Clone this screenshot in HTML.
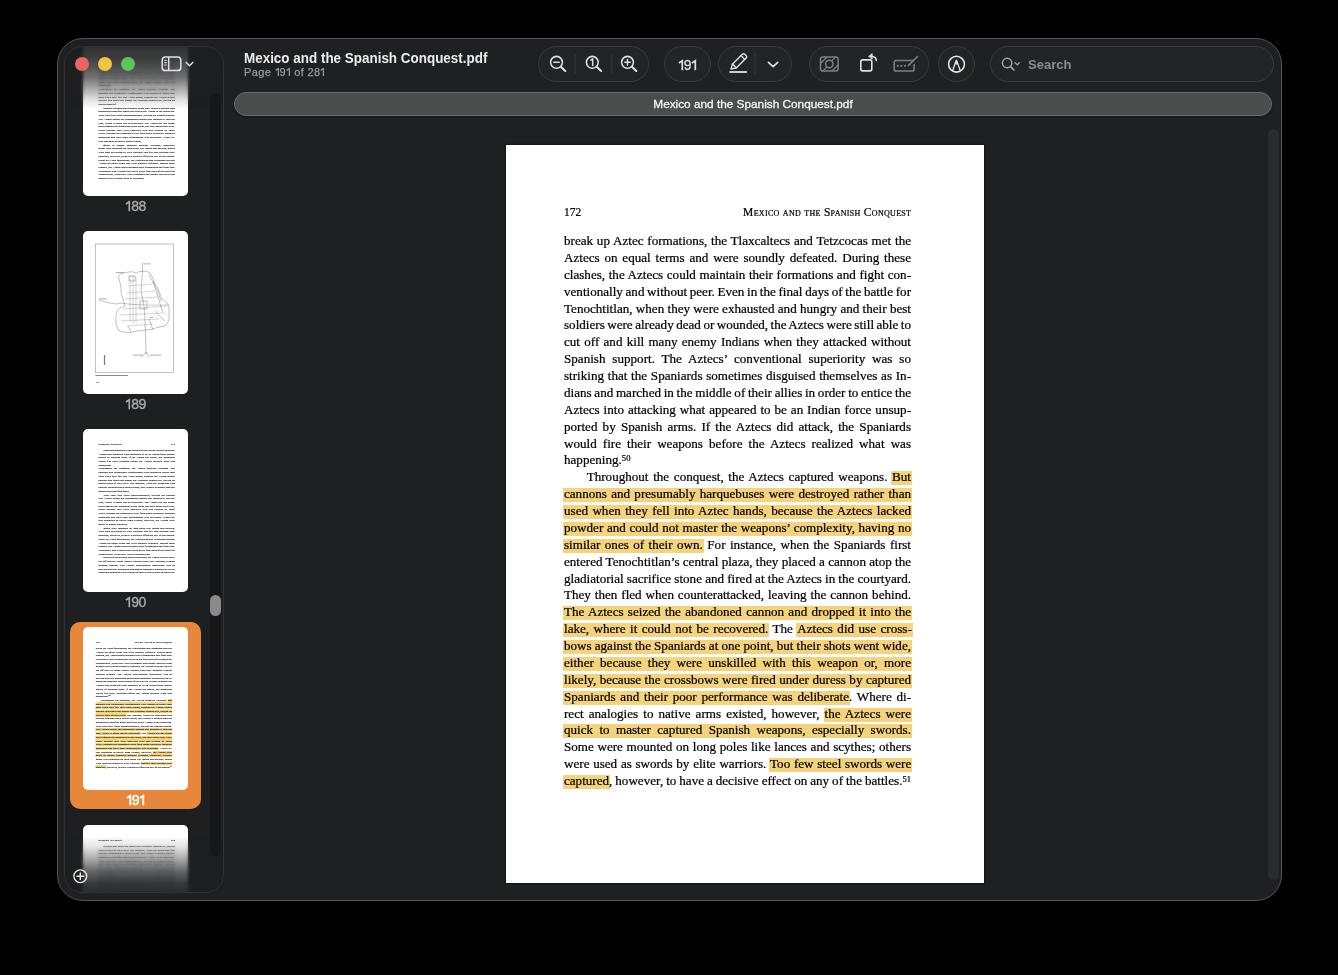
<!DOCTYPE html>
<html><head><meta charset="utf-8">
<style>
*{margin:0;padding:0;box-sizing:border-box}
html,body{width:1338px;height:975px;background:#000;overflow:hidden;font-family:"Liberation Sans",sans-serif}
.abs{position:absolute}
#win,#tab,.abs,#page,#sidewrap{will-change:transform}
#win{position:absolute;left:57px;top:38px;width:1225px;height:863px;border-radius:26px;background:#1f2022;border:1px solid #535455;overflow:hidden}
#side{position:absolute;left:64px;top:46px;width:160px;height:847px;border-radius:18px;border:1px solid #38393b;background:#1e1f21;overflow:hidden}
#sidewrap{position:absolute;left:64px;top:46px;width:160px;height:847px;border-radius:18px;background:#1e1f21;overflow:hidden}
#side{position:absolute;left:64px;top:46px;width:160px;height:847px;border-radius:18px;border:1px solid #313234;background:transparent}
.th{position:absolute;left:19px;width:105px;height:162.8px;background:#fff;border-radius:5px;overflow:hidden}
.tp{position:absolute;left:0;top:0;width:478px;height:738px;transform:scale(0.21967);transform-origin:0 0}
.tp .ln{-webkit-text-stroke:0.5px #1a1a1a;color:#1a1a1a}
.lab{position:absolute;left:19px;width:105px;text-align:center;font-size:14px;letter-spacing:-0.5px;color:#a9a9a9;line-height:16px;-webkit-text-stroke:0.35px #a9a9a9}
#sel{position:absolute;left:5.5px;top:575.6px;width:131.7px;height:187.4px;border-radius:10px;background:#e6873a}
#fadetop{position:absolute;left:0;top:0;width:160px;height:64px;background:linear-gradient(to bottom,rgba(30,31,33,.93) 0px,rgba(30,31,33,.87) 10px,rgba(30,31,33,.78) 20px,rgba(30,31,33,.62) 32px,rgba(30,31,33,.35) 44px,rgba(30,31,33,.1) 55px,rgba(30,31,33,0) 64px)}
#blurtop{position:absolute;left:0;top:0;width:160px;height:62px;backdrop-filter:blur(1.6px);-webkit-mask-image:linear-gradient(to bottom,#000 0,#000 30px,transparent 62px)}
#blurbot{position:absolute;left:0;top:790px;width:160px;height:57px;backdrop-filter:blur(1.6px);-webkit-mask-image:linear-gradient(to top,#000 0,#000 25px,transparent 57px)}
#fadebot{position:absolute;left:0;top:790px;width:160px;height:57px;background:linear-gradient(to top,rgba(30,31,33,.95) 0px,rgba(30,31,33,.88) 10px,rgba(30,31,33,.68) 22px,rgba(30,31,33,.38) 34px,rgba(30,31,33,.12) 46px,rgba(30,31,33,0) 57px)}
#strack{position:absolute;left:145.7px;top:47px;width:11px;height:763px;border-radius:5.5px;background:#161718}
#sthumb{position:absolute;left:146px;top:549.3px;width:10.8px;height:20.5px;border-radius:5.4px;background:#8a8a8a}
.pill{position:absolute;top:46px;height:36px;border-radius:18px;border:1px solid #3a3b3d;background:#232426}
#tab{position:absolute;left:234px;top:92px;width:1038px;height:24px;border-radius:12px;background:#4b4c4c;border:1px solid #6a6b6b;box-shadow:0 1px 2px rgba(0,0,0,.35);color:#f4f4f4;font-size:11.8px;-webkit-text-stroke:0.3px #f4f4f4;text-align:center;line-height:22px;white-space:nowrap}
#page{position:absolute;left:506px;top:145px;width:478px;height:738px;background:#fff;box-shadow:0 0 1.5px 0.6px rgba(0,0,0,.35)}
.ln{position:absolute;white-space:nowrap;font-family:"Liberation Serif",serif;font-size:13.1px;line-height:16.875px;color:#000;-webkit-text-stroke:0.22px #000}
.ln b{font-weight:normal;padding:0 1px 2px 1px;margin:0 -1px;background:linear-gradient(to bottom,transparent 1.6px,#f5d27c 1.6px,#f5d27c 15.6px,transparent 15.6px)}
.ln sup{font-size:8.6px;vertical-align:top;position:relative;top:-2px}
#vtrack{position:absolute;left:1268px;top:129px;width:11px;height:751px;border-radius:6px;background:#2a2b2d}
</style></head><body>
<div id="win"></div>
<div id="sidewrap">
<div class="th" style="top:-12.6px"><div class="tp"><!--T188-->
<div class="ln" style="top:96.04px;left:71.0px;word-spacing:-0.781px">soldiers were already dead or wounded, the Aztecs were still able to</div>
<div class="ln" style="top:112.92px;left:71.0px;word-spacing:0.980px">cut off and kill many enemy Indians when they attacked without</div>
<div class="ln" style="top:129.79px;left:71.0px;word-spacing:3.612px">Spanish support. The Aztecs’ conventional superiority was so</div>
<div class="ln" style="top:146.67px;left:71.0px;word-spacing:0.463px">striking that the Spaniards sometimes disguised themselves as In-</div>
<div class="ln" style="top:163.54px;left:71.0px;word-spacing:-0.578px">dians and marched in the middle of their allies in order to entice the</div>
<div class="ln" style="top:180.42px;left:71.0px;word-spacing:0.669px">Aztecs into attacking what appeared to be an Indian force unsup-</div>
<div class="ln" style="top:197.29px;left:71.0px;word-spacing:1.900px">ported by Spanish arms. If the Aztecs did attack, the Spaniards</div>
<div class="ln" style="top:214.17px;left:71.0px;word-spacing:2.804px">would fire their weapons before the Aztecs realized what was</div>
<div class="ln" style="top:231.04px;left:71.0px;word-spacing:289.172px">happening.</div>
<div class="ln" style="top:247.92px;left:71.0px;word-spacing:4.638px">Throughout the conquest, the Aztecs captured weapons. But</div>
<div class="ln" style="top:264.79px;left:71.0px;word-spacing:1.007px">cannons and presumably harquebuses were destroyed rather than</div>
<div class="ln" style="top:281.66px;left:71.0px;word-spacing:1.141px">used when they fell into Aztec hands, because the Aztecs lacked</div>
<div class="ln" style="top:298.54px;left:71.0px;word-spacing:0.375px">powder and could not master the weapons’ complexity, having no</div>
<div class="ln" style="top:315.41px;left:71.0px;word-spacing:0.000px">similar ones of</div>
<div class="ln" style="top:332.29px;left:93.7px;word-spacing:-0.445px">entered Tenochtitlan’s central plaza, they placed a cannon atop</div>
<div class="ln" style="top:349.16px;left:71.0px;word-spacing:-0.094px">gladiatorial sacrifice stone and fired at the Aztecs in the courtyard.</div>
<div class="ln" style="top:366.04px;left:71.0px;word-spacing:0.654px">They then fled when counterattacked, leaving the cannon behind.</div>
<div class="ln" style="top:382.91px;left:71.0px;word-spacing:1.031px">The Aztecs seized the abandoned cannon and dropped it into the</div>
<div class="ln" style="top:399.79px;left:71.0px;word-spacing:1.192px">lake, where it could not be recovered. The Aztecs did use cross-</div>
<div class="ln" style="top:416.66px;left:71.0px;word-spacing:-0.159px">bows against the Spaniards at one point, but their shots went wide,</div>
<div class="ln" style="top:433.54px;left:71.0px;word-spacing:2.981px">either because they were unskilled with this weapon or, more</div>
<div class="ln" style="top:450.41px;left:71.0px;word-spacing:0.189px">likely, because the crossbows were fired under duress by captured</div>
<div class="ln" style="top:467.29px;left:71.0px;word-spacing:1.457px">Spaniards and their poor performance was deliberate. Where di-</div>
<div class="ln" style="top:484.16px;left:71.0px;word-spacing:0.000px">rect analogies to native arms existed,</div>
<div class="ln" style="top:501.04px;left:93.7px;word-spacing:7.081px">quick to master captured Spanish weapons, especially</div>
<div class="ln" style="top:517.91px;left:71.0px;word-spacing:0.372px">Some were mounted on long poles like lances and scythes; others</div>
<div class="ln" style="top:534.79px;left:71.0px;word-spacing:0.446px">were used as swords by elite warriors. Too few steel swords were</div>
<div class="ln" style="top:551.66px;left:71.0px;word-spacing:0.480px">captured, however, to have a decisive effect on any of the battles.</div>
<div class="ln" style="top:568.54px;left:71.0px;word-spacing:0.495px">break up Aztec formations, the Tlaxcaltecs and Tetzcocas met the</div>
<div class="ln" style="top:585.41px;left:71.0px;word-spacing:1.550px">Aztecs on equal terms and were soundly defeated. During these</div>
<div class="ln" style="top:602.29px;left:71.0px;word-spacing:0.335px">clashes, the Aztecs could maintain their formations and fight con-</div>
<div class="ln" style="top:619.16px;left:71.0px;word-spacing:-0.628px">ventionally and without peer. Even in the final days of the battle for</div>
<div class="ln" style="top:636.04px;left:71.0px;word-spacing:0.035px">Tenochtitlan, when they were exhausted and hungry and their best</div>
<div class="ln" style="top:652.91px;left:71.0px;word-spacing:0.000px">soldiers were already dead or wounded,</div>
<!--/T188--></div></div>
<div class="lab" style="top:152px"><svg width="6.2" height="10.2" viewBox="0 0 6.2 10.2" style="vertical-align:baseline;overflow:visible"><path d="M0.90,3 L4.30,0.75 L4.30,10.2" fill="none" stroke="currentColor" stroke-width="1.65"/></svg>88</div>
<div class="th" style="top:185.2px"><svg width="105" height="162" viewBox="0 0 105 162"><!--MAP--><g fill="none" stroke="#3a3a3a" stroke-width="0.32">
<rect x="12.5" y="13" width="77.7" height="128.5" stroke="#666" stroke-width="0.4"/>
<path d="M36,48 Q34,44 40,42 L46,41 Q50,40 52,42 L55,41 Q62,39 66,41 L68,44 Q71,48 72,53 L75,57 Q77,63 79,68 L84,72 Q87,75 86,80 L86,88 Q85,93 82,95 L76,96 Q68,99 62,99 L54,100 Q46,103 40,101 L35,99 Q32,93 33,85 L34,80 Q37,76 42,75 L40,68 Q37,62 38,56 Z"/>
<path d="M59.5,31.6 L59.5,40 M59.5,40 L58,60 L61,75 L62,89.7 L63.1,123 M63.1,121 L58.1,126.2 M63.1,121 L66.4,126.2"/>
<path d="M15.8,69 Q22,71 27,72 Q33,74 38,72 L44.9,73 L60,74"/>
<path stroke="#777" d="M47,44 L47,90 M50,44 L50,92 M53,46 L53,92 M45,55 L70,53 M44,62 L72,60 M42,68 L75,66 M40,78 L84,75 M36,84 L80,82 M38,90 L76,88 M44,95 L70,93 M60,74 L86,74"/>
<path d="M66,44 L74,58 L78,70 M70,50 L80,82 M57,70 L64,70 L64,78 L57,78 Z M46,45 L52,45 L52,50 L46,50 Z M72,80 L82,90"/>
<path d="M45,95 L48,101 M66,88 L70,99"/>
</g>
<g fill="#777"><rect x="20.9" y="124" width="1.2" height="10" /></g>
<g fill="#9a9a9a">
<rect x="60.5" y="32.5" width="7" height="0.8"/>
<rect x="33" y="41" width="8" height="0.8"/>
<rect x="15.8" y="67.5" width="8" height="0.8"/>
<rect x="49.8" y="123.7" width="10" height="0.8"/>
<rect x="67.3" y="123.7" width="10.7" height="0.8"/>
<rect x="12.5" y="144" width="32.4" height="1" fill="#888"/>
<rect x="13.3" y="151" width="2.8" height="1" fill="#999"/>
<rect x="67" y="86" width="3" height="0.8"/>
</g><!--/MAP--></svg></div>
<div class="lab" style="top:350px"><svg width="6.2" height="10.2" viewBox="0 0 6.2 10.2" style="vertical-align:baseline;overflow:visible"><path d="M0.90,3 L4.30,0.75 L4.30,10.2" fill="none" stroke="currentColor" stroke-width="1.65"/></svg>89</div>
<div class="th" style="top:383.2px"><div class="tp"><!--T190-->
<div class="ln" style="top:59.3px;left:71px;font-size:11.5px;font-variant:small-caps;letter-spacing:0.31px">Conquest and Defeat</div>
<div class="ln" style="top:59.3px;right:59.7px;font-size:11.5px">173</div>
<div class="ln" style="top:88.04px;left:93.7px;word-spacing:-0.911px">dians and marched in the middle of their allies in order to entice</div>
<div class="ln" style="top:104.92px;left:71.0px;word-spacing:0.669px">Aztecs into attacking what appeared to be an Indian force unsup-</div>
<div class="ln" style="top:121.79px;left:71.0px;word-spacing:1.900px">ported by Spanish arms. If the Aztecs did attack, the Spaniards</div>
<div class="ln" style="top:138.67px;left:71.0px;word-spacing:2.804px">would fire their weapons before the Aztecs realized what was</div>
<div class="ln" style="top:155.54px;left:71.0px;word-spacing:289.172px">happening.</div>
<div class="ln" style="top:172.42px;left:71.0px;word-spacing:4.638px">Throughout the conquest, the Aztecs captured weapons. But</div>
<div class="ln" style="top:189.29px;left:71.0px;word-spacing:1.007px">cannons and presumably harquebuses were destroyed rather than</div>
<div class="ln" style="top:206.17px;left:71.0px;word-spacing:1.141px">used when they fell into Aztec hands, because the Aztecs lacked</div>
<div class="ln" style="top:223.04px;left:71.0px;word-spacing:0.375px">powder and could not master the weapons’ complexity, having no</div>
<div class="ln" style="top:239.92px;left:71.0px;word-spacing:1.172px">similar ones of their own. For instance, when the Spaniards first</div>
<div class="ln" style="top:256.79px;left:71.0px;word-spacing:-0.014px">entered Tenochtitlan’s central plaza, they placed a cannon atop the</div>
<div class="ln" style="top:273.66px;left:71.0px;word-spacing:0.000px">gladiatorial sacrifice stone</div>
<div class="ln" style="top:290.54px;left:93.7px;word-spacing:3.532px">They then fled when counterattacked, leaving the cannon</div>
<div class="ln" style="top:307.41px;left:71.0px;word-spacing:1.031px">The Aztecs seized the abandoned cannon and dropped it into the</div>
<div class="ln" style="top:324.29px;left:71.0px;word-spacing:1.192px">lake, where it could not be recovered. The Aztecs did use cross-</div>
<div class="ln" style="top:341.16px;left:71.0px;word-spacing:-0.159px">bows against the Spaniards at one point, but their shots went wide,</div>
<div class="ln" style="top:358.04px;left:71.0px;word-spacing:2.981px">either because they were unskilled with this weapon or, more</div>
<div class="ln" style="top:374.91px;left:71.0px;word-spacing:0.189px">likely, because the crossbows were fired under duress by captured</div>
<div class="ln" style="top:391.79px;left:71.0px;word-spacing:1.457px">Spaniards and their poor performance was deliberate. Where di-</div>
<div class="ln" style="top:408.66px;left:71.0px;word-spacing:1.812px">rect analogies to native arms existed, however, the Aztecs were</div>
<div class="ln" style="top:425.54px;left:71.0px;word-spacing:0.000px">quick to master captured</div>
<div class="ln" style="top:442.41px;left:93.7px;word-spacing:1.811px">Some were mounted on long poles like lances and scythes;</div>
<div class="ln" style="top:459.29px;left:71.0px;word-spacing:0.446px">were used as swords by elite warriors. Too few steel swords were</div>
<div class="ln" style="top:476.16px;left:71.0px;word-spacing:0.480px">captured, however, to have a decisive effect on any of the battles.</div>
<div class="ln" style="top:493.04px;left:71.0px;word-spacing:0.495px">break up Aztec formations, the Tlaxcaltecs and Tetzcocas met the</div>
<div class="ln" style="top:509.91px;left:71.0px;word-spacing:1.550px">Aztecs on equal terms and were soundly defeated. During these</div>
<div class="ln" style="top:526.79px;left:71.0px;word-spacing:0.335px">clashes, the Aztecs could maintain their formations and fight con-</div>
<div class="ln" style="top:543.66px;left:71.0px;word-spacing:-0.628px">ventionally and without peer. Even in the final days of the battle for</div>
<div class="ln" style="top:560.54px;left:71.0px;word-spacing:0.000px">Tenochtitlan, when they were exhausted and</div>
<div class="ln" style="top:577.41px;left:93.7px;word-spacing:-1.782px">soldiers were already dead or wounded, the Aztecs were still able</div>
<div class="ln" style="top:594.29px;left:71.0px;word-spacing:0.980px">cut off and kill many enemy Indians when they attacked without</div>
<div class="ln" style="top:611.16px;left:71.0px;word-spacing:3.612px">Spanish support. The Aztecs’ conventional superiority was so</div>
<div class="ln" style="top:628.04px;left:71.0px;word-spacing:0.463px">striking that the Spaniards sometimes disguised themselves as In-</div>
<div class="ln" style="top:644.91px;left:71.0px;word-spacing:-0.578px">dians and marched in the middle of their allies in order to entice the</div>
<!--/T190--></div></div>
<div class="lab" style="top:548px"><svg width="6.2" height="10.2" viewBox="0 0 6.2 10.2" style="vertical-align:baseline;overflow:visible"><path d="M0.90,3 L4.30,0.75 L4.30,10.2" fill="none" stroke="currentColor" stroke-width="1.65"/></svg>90</div>
<div id="sel"></div>
<div class="th" style="top:581px"><div class="tp"><!--T191-->
<div class="ln" style="top:59.3px;left:58px;font-size:11.5px">172</div>
<div class="ln" style="top:59.3px;right:72.7px;font-size:11.5px;font-variant:small-caps;letter-spacing:0.31px">Mexico and the Spanish Conquest</div>
<div class="ln" style="top:88.04px;left:58.0px;word-spacing:0.495px">break up Aztec formations, the Tlaxcaltecs and Tetzcocas met the</div>
<div class="ln" style="top:104.92px;left:58.0px;word-spacing:1.550px">Aztecs on equal terms and were soundly defeated. During these</div>
<div class="ln" style="top:121.79px;left:58.0px;word-spacing:0.335px">clashes, the Aztecs could maintain their formations and fight con-</div>
<div class="ln" style="top:138.67px;left:58.0px;word-spacing:-0.628px">ventionally and without peer. Even in the final days of the battle for</div>
<div class="ln" style="top:155.54px;left:58.0px;word-spacing:0.035px">Tenochtitlan, when they were exhausted and hungry and their best</div>
<div class="ln" style="top:172.42px;left:58.0px;word-spacing:-0.781px">soldiers were already dead or wounded, the Aztecs were still able to</div>
<div class="ln" style="top:189.29px;left:58.0px;word-spacing:0.980px">cut off and kill many enemy Indians when they attacked without</div>
<div class="ln" style="top:206.17px;left:58.0px;word-spacing:3.612px">Spanish support. The Aztecs’ conventional superiority was so</div>
<div class="ln" style="top:223.04px;left:58.0px;word-spacing:0.463px">striking that the Spaniards sometimes disguised themselves as In-</div>
<div class="ln" style="top:239.92px;left:58.0px;word-spacing:-0.578px">dians and marched in the middle of their allies in order to entice the</div>
<div class="ln" style="top:256.79px;left:58.0px;word-spacing:0.669px">Aztecs into attacking what appeared to be an Indian force unsup-</div>
<div class="ln" style="top:273.66px;left:58.0px;word-spacing:1.900px">ported by Spanish arms. If the Aztecs did attack, the Spaniards</div>
<div class="ln" style="top:290.54px;left:58.0px;word-spacing:2.804px">would fire their weapons before the Aztecs realized what was</div>
<div class="ln" style="top:307.41px;left:58.0px;word-spacing:0.000px">happening.<sup>50</sup></div>
<div class="ln" style="top:324.29px;left:80.7px;word-spacing:1.396px">Throughout the conquest, the Aztecs captured weapons. <b>But</b></div>
<div class="ln" style="top:341.16px;left:58.0px;word-spacing:1.007px"><b>cannons and presumably harquebuses were destroyed rather than</b></div>
<div class="ln" style="top:358.04px;left:58.0px;word-spacing:1.141px"><b>used when they fell into Aztec hands, because the Aztecs lacked</b></div>
<div class="ln" style="top:374.91px;left:58.0px;word-spacing:0.375px"><b>powder and could not master the weapons’ complexity, having no</b></div>
<div class="ln" style="top:391.79px;left:58.0px;word-spacing:1.172px"><b>similar ones of their own.</b> For instance, when the Spaniards first</div>
<div class="ln" style="top:408.66px;left:58.0px;word-spacing:-0.014px">entered Tenochtitlan’s central plaza, they placed a cannon atop the</div>
<div class="ln" style="top:425.54px;left:58.0px;word-spacing:-0.094px">gladiatorial sacrifice stone and fired at the Aztecs in the courtyard.</div>
<div class="ln" style="top:442.41px;left:58.0px;word-spacing:0.654px">They then fled when counterattacked, leaving the cannon behind.</div>
<div class="ln" style="top:459.29px;left:58.0px;word-spacing:1.031px"><b>The Aztecs seized the abandoned cannon and dropped it into the</b></div>
<div class="ln" style="top:476.16px;left:58.0px;word-spacing:1.192px"><b>lake, where it could not be recovered.</b> The <b>Aztecs did use cross-</b></div>
<div class="ln" style="top:493.04px;left:58.0px;word-spacing:-0.159px"><b>bows against the Spaniards at one point, but their shots went wide,</b></div>
<div class="ln" style="top:509.91px;left:58.0px;word-spacing:2.981px"><b>either because they were unskilled with this weapon or, more</b></div>
<div class="ln" style="top:526.79px;left:58.0px;word-spacing:0.189px"><b>likely, because the crossbows were fired under duress by captured</b></div>
<div class="ln" style="top:543.66px;left:58.0px;word-spacing:1.457px"><b>Spaniards and their poor performance was deliberate</b>. Where di-</div>
<div class="ln" style="top:560.54px;left:58.0px;word-spacing:1.812px">rect analogies to native arms existed, however, <b>the Aztecs were</b></div>
<div class="ln" style="top:577.41px;left:58.0px;word-spacing:3.078px"><b>quick to master captured Spanish weapons, especially swords.</b></div>
<div class="ln" style="top:594.29px;left:58.0px;word-spacing:0.372px">Some were mounted on long poles like lances and scythes; others</div>
<div class="ln" style="top:611.16px;left:58.0px;word-spacing:0.446px">were used as swords by elite warriors. <b>Too few steel swords were</b></div>
<div class="ln" style="top:628.04px;left:58.0px;word-spacing:-0.301px"><b>captured</b>, however, to have a decisive effect on any of the battles.<sup>51</sup></div>
<!--/T191--></div></div>
<div class="lab" style="top:745.8px;color:#fff;-webkit-text-stroke:0.5px #fff;letter-spacing:-0.3px"><svg width="6.2" height="10.2" viewBox="0 0 6.2 10.2" style="vertical-align:baseline;overflow:visible"><path d="M0.90,3 L4.30,0.75 L4.30,10.2" fill="none" stroke="currentColor" stroke-width="1.9"/></svg>9<svg width="6.2" height="10.2" viewBox="0 0 6.2 10.2" style="vertical-align:baseline;overflow:visible"><path d="M0.90,3 L4.30,0.75 L4.30,10.2" fill="none" stroke="currentColor" stroke-width="1.9"/></svg></div>
<div class="th" style="top:778.8px"><div class="tp"><!--T192-->
<div class="ln" style="top:59.3px;left:71px;font-size:11.5px;font-variant:small-caps;letter-spacing:0.31px">Conquest and Defeat</div>
<div class="ln" style="top:59.3px;right:59.7px;font-size:11.5px">175</div>
<div class="ln" style="top:88.04px;left:93.7px;word-spacing:-0.371px">powder and could not master the weapons’ complexity, having</div>
<div class="ln" style="top:104.92px;left:71.0px;word-spacing:1.172px">similar ones of their own. For instance, when the Spaniards first</div>
<div class="ln" style="top:121.79px;left:71.0px;word-spacing:-0.014px">entered Tenochtitlan’s central plaza, they placed a cannon atop the</div>
<div class="ln" style="top:138.67px;left:71.0px;word-spacing:-0.094px">gladiatorial sacrifice stone and fired at the Aztecs in the courtyard.</div>
<div class="ln" style="top:155.54px;left:71.0px;word-spacing:0.654px">They then fled when counterattacked, leaving the cannon behind.</div>
<div class="ln" style="top:172.42px;left:71.0px;word-spacing:1.031px">The Aztecs seized the abandoned cannon and dropped it into the</div>
<div class="ln" style="top:189.29px;left:71.0px;word-spacing:1.192px">lake, where it could not be recovered. The Aztecs did use cross-</div>
<div class="ln" style="top:206.17px;left:71.0px;word-spacing:-0.159px">bows against the Spaniards at one point, but their shots went wide,</div>
<div class="ln" style="top:223.04px;left:71.0px;word-spacing:2.981px">either because they were unskilled with this weapon or, more</div>
<div class="ln" style="top:239.92px;left:71.0px;word-spacing:0.189px">likely, because the crossbows were fired under duress by captured</div>
<div class="ln" style="top:256.79px;left:71.0px;word-spacing:1.457px">Spaniards and their poor performance was deliberate. Where di-</div>
<div class="ln" style="top:273.66px;left:71.0px;word-spacing:1.812px">rect analogies to native arms existed, however, the Aztecs were</div>
<div class="ln" style="top:290.54px;left:71.0px;word-spacing:3.078px">quick to master captured Spanish weapons, especially swords.</div>
<div class="ln" style="top:307.41px;left:71.0px;word-spacing:0.372px">Some were mounted on long poles like lances and scythes; others</div>
<div class="ln" style="top:324.29px;left:71.0px;word-spacing:0.446px">were used as swords by elite warriors. Too few steel swords were</div>
<div class="ln" style="top:341.16px;left:71.0px;word-spacing:0.480px">captured, however, to have a decisive effect on any of the battles.</div>
<div class="ln" style="top:358.04px;left:71.0px;word-spacing:0.495px">break up Aztec formations, the Tlaxcaltecs and Tetzcocas met the</div>
<div class="ln" style="top:374.91px;left:71.0px;word-spacing:1.550px">Aztecs on equal terms and were soundly defeated. During these</div>
<div class="ln" style="top:391.79px;left:71.0px;word-spacing:0.335px">clashes, the Aztecs could maintain their formations and fight con-</div>
<div class="ln" style="top:408.66px;left:71.0px;word-spacing:-0.628px">ventionally and without peer. Even in the final days of the battle for</div>
<div class="ln" style="top:425.54px;left:71.0px;word-spacing:0.035px">Tenochtitlan, when they were exhausted and hungry and their best</div>
<div class="ln" style="top:442.41px;left:71.0px;word-spacing:-0.781px">soldiers were already dead or wounded, the Aztecs were still able to</div>
<div class="ln" style="top:459.29px;left:71.0px;word-spacing:0.980px">cut off and kill many enemy Indians when they attacked without</div>
<div class="ln" style="top:476.16px;left:71.0px;word-spacing:3.612px">Spanish support. The Aztecs’ conventional superiority was so</div>
<div class="ln" style="top:493.04px;left:71.0px;word-spacing:0.463px">striking that the Spaniards sometimes disguised themselves as In-</div>
<div class="ln" style="top:509.91px;left:71.0px;word-spacing:-0.578px">dians and marched in the middle of their allies in order to entice the</div>
<div class="ln" style="top:526.79px;left:71.0px;word-spacing:0.669px">Aztecs into attacking what appeared to be an Indian force unsup-</div>
<div class="ln" style="top:543.66px;left:71.0px;word-spacing:1.900px">ported by Spanish arms. If the Aztecs did attack, the Spaniards</div>
<div class="ln" style="top:560.54px;left:71.0px;word-spacing:2.804px">would fire their weapons before the Aztecs realized what was</div>
<div class="ln" style="top:577.41px;left:71.0px;word-spacing:289.172px">happening.</div>
<div class="ln" style="top:594.29px;left:71.0px;word-spacing:4.638px">Throughout the conquest, the Aztecs captured weapons. But</div>
<div class="ln" style="top:611.16px;left:71.0px;word-spacing:1.007px">cannons and presumably harquebuses were destroyed rather than</div>
<div class="ln" style="top:628.04px;left:71.0px;word-spacing:1.141px">used when they fell into Aztec hands, because the Aztecs lacked</div>
<div class="ln" style="top:644.91px;left:71.0px;word-spacing:0.375px">powder and could not master the weapons’ complexity, having no</div>
<!--/T192--></div></div>
<div id="blurtop"></div><div id="fadetop"></div>
<div id="blurbot"></div><div id="fadebot"></div>
<div id="strack"></div>
<div id="sthumb"></div>
</div>
<div id="side"></div>
<svg class="abs" style="left:72px;top:868px" width="17" height="17" viewBox="0 0 17 17"><g fill="none" stroke="#eeeeee" stroke-linecap="round"><circle cx="8.3" cy="8.3" r="6.4" stroke-width="1.3"/><line x1="8.3" y1="5" x2="8.3" y2="11.6" stroke-width="1.4"/><line x1="5" y1="8.3" x2="11.6" y2="8.3" stroke-width="1.4"/></g></svg>
<div class="pill" style="left:538px;width:111px"></div>
<div class="pill" style="left:664px;width:47px"></div>
<div class="pill" style="left:718px;width:74px"></div>
<div class="pill" style="left:809px;width:120px"></div>
<div class="pill" style="left:938px;width:37px"></div>
<div class="pill" style="left:990px;width:284px"></div>

<div class="abs" style="left:244px;top:49.6px;font-size:13.45px;font-weight:bold;color:#ececec;white-space:nowrap;line-height:16px;transform:scaleY(1.08);transform-origin:0 0">Mexico and the Spanish Conquest.pdf</div>
<div class="abs" style="left:244px;top:66.1px;font-size:11px;color:#9a9a9a;white-space:nowrap;line-height:13px;letter-spacing:0.36px;-webkit-text-stroke:0.25px #9a9a9a">Page <svg width="4.87" height="8.01" viewBox="0 0 4.87 8.01" style="vertical-align:baseline;overflow:visible"><path d="M0.71,2.36 L3.38,0.59 L3.38,8.01" fill="none" stroke="currentColor" stroke-width="1.25"/></svg>9<svg width="4.87" height="8.01" viewBox="0 0 4.87 8.01" style="vertical-align:baseline;overflow:visible"><path d="M0.71,2.36 L3.38,0.59 L3.38,8.01" fill="none" stroke="currentColor" stroke-width="1.25"/></svg> of 28<svg width="4.87" height="8.01" viewBox="0 0 4.87 8.01" style="vertical-align:baseline;overflow:visible"><path d="M0.71,2.36 L3.38,0.59 L3.38,8.01" fill="none" stroke="currentColor" stroke-width="1.25"/></svg></div>
<div class="abs" style="left:664px;top:56.6px;width:47px;text-align:center;font-size:14px;color:#dcdcdc;line-height:16px;-webkit-text-stroke:0.3px #dcdcdc;letter-spacing:-0.3px"><svg width="6.2" height="10.2" viewBox="0 0 6.2 10.2" style="vertical-align:baseline;overflow:visible"><path d="M0.90,3 L4.30,0.75 L4.30,10.2" fill="none" stroke="currentColor" stroke-width="1.75"/></svg>9<svg width="6.2" height="10.2" viewBox="0 0 6.2 10.2" style="vertical-align:baseline;overflow:visible"><path d="M0.90,3 L4.30,0.75 L4.30,10.2" fill="none" stroke="currentColor" stroke-width="1.75"/></svg></div>
<div class="abs" style="left:1028px;top:56.8px;font-size:13px;font-weight:bold;color:#8c8c8c;line-height:16px">Search</div>
<svg class="abs" style="left:0;top:0" width="1338" height="130" viewBox="0 0 1338 130">
 <g fill="none" stroke-linecap="round" stroke-linejoin="round">
  <!-- traffic lights -->
  <circle cx="82" cy="64" r="7" fill="#ec6561" stroke="none"/>
  <circle cx="105" cy="64" r="7" fill="#f4c440" stroke="none"/>
  <circle cx="128" cy="64" r="7" fill="#5fc25a" stroke="none"/>
  <!-- sidebar toggle -->
  <g stroke="#e2e2e2" stroke-width="1.5">
   <rect x="162.2" y="57" width="18.6" height="13.6" rx="3.2"/>
   <line x1="168.7" y1="57.4" x2="168.7" y2="70.2"/>
  </g>
  <g stroke="#d6d6d6" stroke-width="1.1">
   <line x1="164.6" y1="60.2" x2="166.4" y2="60.2"/><line x1="164.6" y1="62.6" x2="166.4" y2="62.6"/><line x1="164.6" y1="65" x2="166.4" y2="65"/>
  </g>
  <polyline points="186.3,62.4 189.5,65.8 192.7,62.4" stroke="#dcdcdc" stroke-width="1.5"/>
  <!-- zoom group -->
  <g stroke="#dedede">
   <circle cx="556.5" cy="62.3" r="5.9" stroke-width="1.55"/>
   <line x1="560.9" y1="66.7" x2="565.3" y2="71" stroke-width="2.1"/>
   <line x1="553.8" y1="62.3" x2="559.2" y2="62.3" stroke-width="1.6"/>
   <circle cx="592.3" cy="62.3" r="5.9" stroke-width="1.55"/>
   <line x1="596.7" y1="66.7" x2="601.1" y2="71" stroke-width="2.1"/>
   <circle cx="627.5" cy="62.3" r="5.9" stroke-width="1.55"/>
   <line x1="631.9" y1="66.7" x2="636.3" y2="71" stroke-width="2.1"/>
   <line x1="624.8" y1="62.3" x2="630.2" y2="62.3" stroke-width="1.5"/>
   <line x1="627.5" y1="59.6" x2="627.5" y2="65" stroke-width="1.5"/>
  </g>
  <path d="M590.9,60.1 L592.7,58.9 L592.7,65.6" stroke="#dedede" stroke-width="1.5"/>
  <g stroke="#333436" stroke-width="1.3">
   <line x1="575.2" y1="54.5" x2="575.2" y2="73.4"/>
   <line x1="611.8" y1="54.5" x2="611.8" y2="73.4"/>
   <line x1="755" y1="54" x2="755" y2="73.6"/>
  </g>
  <!-- pencil -->
  <g stroke="#dcdcdc" stroke-width="1.45">
   <path d="M731,69 L732.4,64.2 L742.3,54.3 Q743.6,53 745,54.4 L746,55.4 Q747.4,56.8 746.1,58.1 L736.2,68 Z"/>
   <line x1="741" y1="55.6" x2="744.8" y2="59.4"/>
   <line x1="732.6" y1="64" x2="736.4" y2="67.8"/>
  </g>
  <line x1="730.2" y1="71.9" x2="746.2" y2="71.9" stroke="#cfcfcf" stroke-width="2"/>
  <polyline points="768.4,62.4 773.1,66.6 777.7,62.4" stroke="#dedede" stroke-width="1.7"/>
  <!-- redact image icon (dim) -->
  <defs><clipPath id="rc"><rect x="820.5" y="57" width="17.6" height="14" rx="2.2"/></clipPath></defs>
  <g stroke="#7e7f80" stroke-width="1.5">
   <rect x="820.5" y="57" width="17.6" height="14" rx="2.2"/>
   <circle cx="829.3" cy="64" r="3.7"/>
  </g>
  <g stroke="#7e7f80" stroke-width="1.3" clip-path="url(#rc)">
   <line x1="818" y1="66" x2="827" y2="57"/>
   <line x1="821" y1="73" x2="826.3" y2="67.6"/>
   <line x1="832.2" y1="60.4" x2="837" y2="55.6"/>
   <line x1="830" y1="73" x2="841" y2="62"/>
  </g>
  <!-- rotate -->
  <g stroke="#e0e0e0" stroke-width="1.6">
   <rect x="860.8" y="59.9" width="11" height="11" rx="1.8"/>
   <path d="M876.3,60.6 Q876.3,56.6 871.2,56.3"/>
  </g>
  <path d="M868.8,56.2 L872.2,53.6 L872.2,58.8 Z" fill="#e0e0e0" stroke="#e0e0e0" stroke-width="0.8"/>
  <!-- signature (dim) -->
  <g stroke="#7e7f80" stroke-width="1.5">
   <path d="M912.6,60.6 L896,60.6 Q894.2,60.6 894.2,62.4 L894.2,69.2 Q894.2,71 896,71 L912.3,71 Q914.1,71 914.1,69.2 L914.1,64.6"/>
   <line x1="908.3" y1="65.6" x2="917.5" y2="56.5"/>
  </g>
  <g fill="#7e7f80"><circle cx="897.8" cy="65.8" r="1.15"/><circle cx="901.4" cy="65.8" r="1.15"/><circle cx="905" cy="65.8" r="1.15"/></g>
  <!-- markup -->
  <circle cx="956.5" cy="64.2" r="7.9" stroke="#e6e6e6" stroke-width="1.6"/>
  <path d="M952.7,70.5 L955.4,62.6 L956.4,60.2 L957.4,62.6 L960.2,70.5" stroke="#e6e6e6" stroke-width="1.3"/>
  <path d="M954.8,64.6 L956.4,60 L958,64.6 Z" fill="#e6e6e6" stroke="none"/>
  <!-- search icon -->
  <g stroke="#a6a6a6">
   <circle cx="1007.1" cy="63" r="4.7" stroke-width="1.5"/>
   <line x1="1010.6" y1="66.5" x2="1013.8" y2="69.8" stroke-width="1.7"/>
   <polyline points="1015.1,62.7 1017.2,64.9 1019.3,62.7" stroke-width="1.3"/>
  </g>
 </g>
</svg>
<div id="tab">Mexico and the Spanish Conquest.pdf</div>
<div id="vtrack"></div>
<div id="page">
<div class="ln" style="top:59.3px;left:58px;font-size:11.5px">172</div>
<div class="ln" style="top:59.3px;right:72.7px;font-size:11.5px;font-variant:small-caps;letter-spacing:0.31px">Mexico and the Spanish Conquest</div>
<!--PAGE-->
<div class="ln" style="top:88.04px;left:58.0px;word-spacing:0.495px">break up Aztec formations, the Tlaxcaltecs and Tetzcocas met the</div>
<div class="ln" style="top:104.92px;left:58.0px;word-spacing:1.550px">Aztecs on equal terms and were soundly defeated. During these</div>
<div class="ln" style="top:121.79px;left:58.0px;word-spacing:0.335px">clashes, the Aztecs could maintain their formations and fight con-</div>
<div class="ln" style="top:138.67px;left:58.0px;word-spacing:-0.628px">ventionally and without peer. Even in the final days of the battle for</div>
<div class="ln" style="top:155.54px;left:58.0px;word-spacing:0.035px">Tenochtitlan, when they were exhausted and hungry and their best</div>
<div class="ln" style="top:172.42px;left:58.0px;word-spacing:-0.781px">soldiers were already dead or wounded, the Aztecs were still able to</div>
<div class="ln" style="top:189.29px;left:58.0px;word-spacing:0.980px">cut off and kill many enemy Indians when they attacked without</div>
<div class="ln" style="top:206.17px;left:58.0px;word-spacing:3.612px">Spanish support. The Aztecs’ conventional superiority was so</div>
<div class="ln" style="top:223.04px;left:58.0px;word-spacing:0.463px">striking that the Spaniards sometimes disguised themselves as In-</div>
<div class="ln" style="top:239.92px;left:58.0px;word-spacing:-0.578px">dians and marched in the middle of their allies in order to entice the</div>
<div class="ln" style="top:256.79px;left:58.0px;word-spacing:0.669px">Aztecs into attacking what appeared to be an Indian force unsup-</div>
<div class="ln" style="top:273.66px;left:58.0px;word-spacing:1.900px">ported by Spanish arms. If the Aztecs did attack, the Spaniards</div>
<div class="ln" style="top:290.54px;left:58.0px;word-spacing:2.804px">would fire their weapons before the Aztecs realized what was</div>
<div class="ln" style="top:307.41px;left:58.0px;word-spacing:0.000px">happening.<sup>50</sup></div>
<div class="ln" style="top:324.29px;left:80.7px;word-spacing:1.396px">Throughout the conquest, the Aztecs captured weapons. <b>But</b></div>
<div class="ln" style="top:341.16px;left:58.0px;word-spacing:1.007px"><b>cannons and presumably harquebuses were destroyed rather than</b></div>
<div class="ln" style="top:358.04px;left:58.0px;word-spacing:1.141px"><b>used when they fell into Aztec hands, because the Aztecs lacked</b></div>
<div class="ln" style="top:374.91px;left:58.0px;word-spacing:0.375px"><b>powder and could not master the weapons’ complexity, having no</b></div>
<div class="ln" style="top:391.79px;left:58.0px;word-spacing:1.172px"><b>similar ones of their own.</b> For instance, when the Spaniards first</div>
<div class="ln" style="top:408.66px;left:58.0px;word-spacing:-0.014px">entered Tenochtitlan’s central plaza, they placed a cannon atop the</div>
<div class="ln" style="top:425.54px;left:58.0px;word-spacing:-0.094px">gladiatorial sacrifice stone and fired at the Aztecs in the courtyard.</div>
<div class="ln" style="top:442.41px;left:58.0px;word-spacing:0.654px">They then fled when counterattacked, leaving the cannon behind.</div>
<div class="ln" style="top:459.29px;left:58.0px;word-spacing:1.031px"><b>The Aztecs seized the abandoned cannon and dropped it into the</b></div>
<div class="ln" style="top:476.16px;left:58.0px;word-spacing:1.192px"><b>lake, where it could not be recovered.</b> The <b>Aztecs did use cross-</b></div>
<div class="ln" style="top:493.04px;left:58.0px;word-spacing:-0.159px"><b>bows against the Spaniards at one point, but their shots went wide,</b></div>
<div class="ln" style="top:509.91px;left:58.0px;word-spacing:2.981px"><b>either because they were unskilled with this weapon or, more</b></div>
<div class="ln" style="top:526.79px;left:58.0px;word-spacing:0.189px"><b>likely, because the crossbows were fired under duress by captured</b></div>
<div class="ln" style="top:543.66px;left:58.0px;word-spacing:1.457px"><b>Spaniards and their poor performance was deliberate</b>. Where di-</div>
<div class="ln" style="top:560.54px;left:58.0px;word-spacing:1.812px">rect analogies to native arms existed, however, <b>the Aztecs were</b></div>
<div class="ln" style="top:577.41px;left:58.0px;word-spacing:3.078px"><b>quick to master captured Spanish weapons, especially swords.</b></div>
<div class="ln" style="top:594.29px;left:58.0px;word-spacing:0.372px">Some were mounted on long poles like lances and scythes; others</div>
<div class="ln" style="top:611.16px;left:58.0px;word-spacing:0.446px">were used as swords by elite warriors. <b>Too few steel swords were</b></div>
<div class="ln" style="top:628.04px;left:58.0px;word-spacing:-0.301px"><b>captured</b>, however, to have a decisive effect on any of the battles.<sup>51</sup></div>
<!--/PAGE-->
</div>
</body></html>
